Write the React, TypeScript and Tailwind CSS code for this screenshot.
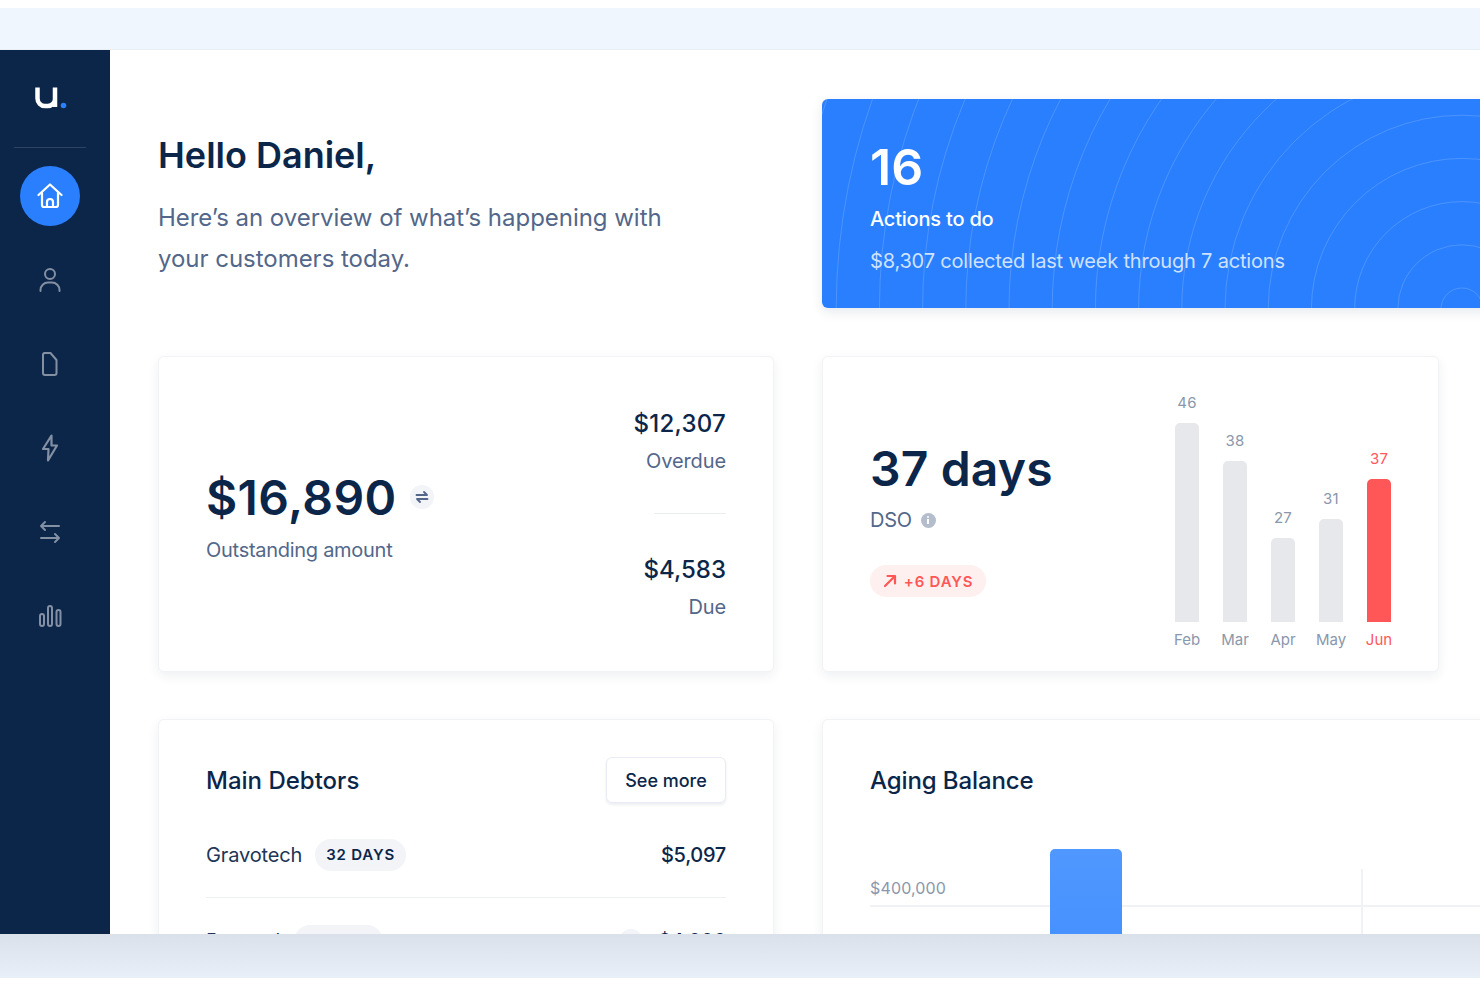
const font = "font-['Inter',sans-serif]";

function Logo() {
  return (
    <svg width="34" height="26" viewBox="0 0 34 26" fill="none">
      <path d="M3.500 2.500v11a7.500 7.500 0 0 0 7.500 7.500h3a7 7 0 0 0 7-7v-11.500M21 13v9" stroke="#fff" strokeWidth="4.500" />
      <circle cx="29.500" cy="20.500" r="2.800" fill="#2a7fff" />
    </svg>
  );
}

function HomeIcon() {
  return (
    <svg width="26" height="26" viewBox="0 0 26 26" fill="none" stroke="#fff" strokeWidth="2.200" strokeLinecap="round" strokeLinejoin="round">
      <path d="M1.500 12 13 1.500 24.500 12" />
      <path d="M5 9.500V22a2 2 0 0 0 2 2h12a2 2 0 0 0 2-2V9.500" />
      <path d="M10 24v-5a3 3 0 0 1 6 0v5" />
    </svg>
  );
}

function UserIcon() {
  return (
    <svg width="24" height="26" viewBox="0 0 24 26" fill="none" stroke="#838fa3" strokeWidth="2" strokeLinecap="round">
      <circle cx="12" cy="7" r="5" />
      <path d="M2.500 24v-1a7.500 7.500 0 0 1 7.500-7.500h4a7.500 7.500 0 0 1 7.500 7.500v1" />
    </svg>
  );
}

function FileIcon() {
  return (
    <svg width="20" height="26" viewBox="0 0 20 26" fill="none" stroke="#838fa3" strokeWidth="2" strokeLinejoin="round">
      <path d="M4 2h6.500l6 7v13a2 2 0 0 1-2 2H5a2 2 0 0 1-2-2V4a2 2 0 0 1 2-2Z" />
    </svg>
  );
}

function BoltIcon() {
  return (
    <svg width="18" height="28" viewBox="0 0 18 28" fill="none" stroke="#838fa3" strokeWidth="2.200" strokeLinejoin="round">
      <path d="M10.500 1.500 2 15h5.500L7 26.500 16 11.500h-5.500Z" />
    </svg>
  );
}

function SwapIcon() {
  return (
    <svg width="24" height="26" viewBox="0 0 24 26" fill="none" stroke="#838fa3" strokeWidth="2" strokeLinecap="round" strokeLinejoin="round">
      <path d="M21 7H3M7 3 3 7l4 4" />
      <path d="M3 19h18M17 15l4 4-4 4" />
    </svg>
  );
}

function BarsIcon() {
  return (
    <svg width="24" height="26" viewBox="0 0 24 26" fill="none" stroke="#838fa3" strokeWidth="2">
      <rect x="2" y="11" width="4" height="12" rx="2" />
      <rect x="10" y="3" width="4" height="20" rx="2" />
      <rect x="18.500" y="7" width="4" height="16" rx="2" />
    </svg>
  );
}

function Sidebar() {
  return (
    <aside className="w-[110px] shrink-0 bg-[#0b2649] flex flex-col items-center">
      <div className="w-full pl-[14px] pr-[24px]">
        <div className="h-[98px] flex items-center justify-center border-b border-[#2c4364]">
          <span className="relative left-[0.5px] -top-[1px]"><Logo /></span>
        </div>
      </div>
      <div className="flex flex-col items-center w-[60px] mr-[10px] mt-[18px]">
        <div className="w-[60px] h-[60px] rounded-full bg-[#2a7fff] flex items-center justify-center"><HomeIcon /></div>
        <div className="h-[84px] mt-[12px] flex items-center justify-center"><UserIcon /></div>
        <div className="h-[84px] flex items-center justify-center"><FileIcon /></div>
        <div className="h-[84px] flex items-center justify-center"><BoltIcon /></div>
        <div className="h-[84px] flex items-center justify-center"><SwapIcon /></div>
        <div className="h-[84px] flex items-center justify-center"><BarsIcon /></div>
      </div>
    </aside>
  );
}

function Card({ className, children }: { className: string; children: React.ReactNode }) {
  return (
    <div className={`bg-white rounded-[6px] border border-[#f1f3f6] shadow-[0_4px_12px_rgba(11,38,73,0.07)] ${className}`}>
      {children}
    </div>
  );
}

const bars = [
  { v: 46, m: "Feb", h: 199 },
  { v: 38, m: "Mar", h: 161 },
  { v: 27, m: "Apr", h: 84 },
  { v: 31, m: "May", h: 103 },
  { v: 37, m: "Jun", h: 143, red: true },
];

function Rings() {
  const radii = Array.from({ length: 18 }, (_, i) => 21 + i * 43.2);
  return (
    <svg className="absolute inset-0 w-full h-full" fill="none">
      {radii.map((r) => (
        <circle key={r} cx="640" cy="210" r={r} stroke="#ffffff" strokeOpacity="0.16" strokeWidth="1" />
      ))}
    </svg>
  );
}

export default function App() {
  return (
    <div className={`w-[1480px] h-[987px] overflow-hidden bg-white flex flex-col ${font}`}>
      <div className="h-[8px] shrink-0 bg-white" />
      <div className="h-[42px] shrink-0 bg-[#eff6fe] border-b border-[#e7eef6]" />
      <div className="h-[884px] shrink-0 flex overflow-hidden bg-white">
        <Sidebar />
        <main className="flex-1 min-w-0 overflow-hidden pl-[48px] pt-[49px] flex flex-col gap-[47px]">
          <section className="flex items-start gap-[48px] shrink-0 h-[210px]">
            <div className="w-[616px] shrink-0 pt-[34px]">
              <h1 className="text-[36px] leading-[44px] font-semibold text-[#0b2649]">Hello Daniel,</h1>
              <p className="mt-[20px] text-[24px] leading-[41px] tracking-[-0.03px] text-[#53678a]">
                Here’s an overview of what’s happening with<br />your customers today.
              </p>
            </div>
            <div className="relative w-[700px] shrink-0 h-[209px] rounded-[6px] bg-[#2a7fff] overflow-hidden pl-[48px] pt-[40px] shadow-[0_4px_12px_rgba(11,38,73,0.1)]">
              <Rings />
              <div className="relative text-[50px] leading-[56px] font-semibold text-white">16</div>
              <div className="relative mt-[10px] text-[20px] leading-[28px] tracking-[-0.2px] font-medium text-white">Actions to do</div>
              <div className="relative mt-[14px] text-[20px] leading-[28px] tracking-[-0.18px] text-[#cfe2ff]">$8,307 collected last week through 7 actions</div>
            </div>
          </section>

          <section className="flex gap-[48px] shrink-0">
            <Card className="w-[616px] shrink-0 h-[316px] flex items-center justify-between pl-[47px] pr-[47px]">
              <div className="pt-[4px]">
                <div className="flex items-center gap-[13px]">
                  <span className="text-[48px] leading-[58px] tracking-[0.4px] font-semibold text-[#0b2649]">$16,890</span>
                  <span className="w-[24px] h-[24px] mb-[2px] rounded-full bg-[#f2f4f8] flex items-center justify-center">
                    <svg width="14" height="12" viewBox="0 0 14 12" fill="none" stroke="#52668a" strokeWidth="1.800" strokeLinecap="round" strokeLinejoin="round">
                      <path d="M1.500 4h10.500M9 1l3 3" />
                      <path d="M12.500 8H2M5 11 2 8" />
                    </svg>
                  </span>
                </div>
                <div className="mt-[9px] text-[20px] leading-[28px] tracking-[-0.28px] text-[#53678a]">Outstanding amount</div>
              </div>
              <div className="w-[72px] flex flex-col items-end">
                <div className="text-[24px] leading-[32px] tracking-[0.25px] font-medium text-[#0b2649] whitespace-nowrap">$12,307</div>
                <div className="mt-[7px] text-[20px] leading-[28px] tracking-[-0.1px] text-[#53678a]">Overdue</div>
                <div className="w-full h-px bg-[#e9ecf1] mt-[38px] mb-[40px]" />
                <div className="text-[24px] leading-[32px] font-medium text-[#0b2649] whitespace-nowrap">$4,583</div>
                <div className="mt-[7px] text-[20px] leading-[28px] tracking-[-0.1px] text-[#53678a]">Due</div>
              </div>
            </Card>
            <Card className="w-[617px] shrink-0 h-[316px] flex justify-between pl-[47px] pr-[47px]">
              <div className="pt-[80px]">
                <div className="text-[48px] leading-[64px] tracking-[0.15px] font-semibold text-[#0b2649] whitespace-nowrap">37 days</div>
                <div className="mt-[5px] flex items-center gap-[9px]">
                  <span className="text-[20px] leading-[28px] tracking-[-0.2px] text-[#53678a]">DSO</span>
                  <span className="w-[15px] h-[15px] rounded-full bg-[#b4bdcb] flex flex-col items-center justify-center gap-[1px]">
                    <span className="w-[2px] h-[2px] bg-white rounded-full" />
                    <span className="w-[2px] h-[5px] bg-white" />
                  </span>
                </div>
                <div className="mt-[31px] w-[116px] h-[32px] rounded-full bg-[#fff0f0] flex items-center justify-center gap-[7px]">
                  <svg width="14" height="14" viewBox="0 0 14 14" fill="none" stroke="#ff5757" strokeWidth="2.200" strokeLinecap="round" strokeLinejoin="round">
                    <path d="M2 12 12 2M4.500 2H12v7.500" />
                  </svg>
                  <span className="text-[15px] leading-none font-semibold text-[#ff5757] tracking-[0.8px]">+6 DAYS</span>
                </div>
              </div>
              <div className="flex items-end gap-[24px] pb-[21px]">
                {bars.map((b) => (
                  <div key={b.m} className="w-[24px] flex flex-col items-center">
                    <span className={`text-[15px] leading-[20px] tracking-[0.2px] mb-[10px] ${b.red ? "text-[#ff5757]" : "text-[#8a97ac]"}`}>{b.v}</span>
                    <div
                      className={`w-[24px] rounded-t-[5px] ${b.red ? "bg-[#ff5757]" : "bg-[#e6e8ec]"}`}
                      style={{ height: b.h }}
                    />
                    <span className={`mt-[8px] text-[15px] leading-[20px] ${b.red ? "text-[#ff5757]" : "text-[#8a97ac]"}`}>{b.m}</span>
                  </div>
                ))}
              </div>
            </Card>
          </section>

          <section className="flex gap-[48px] shrink-0">
            <Card className="w-[616px] shrink-0 pl-[47px] pr-[47px] pt-[37px]">
              <div className="flex items-center justify-between h-[46px]">
                <h2 className="text-[24px] leading-[32px] pt-[2px] font-medium text-[#0b2649]">Main Debtors</h2>
                <button className="w-[120px] h-[46px] rounded-[6px] border border-[#e9ecf4] shadow-[0_2px_3px_rgba(11,38,73,0.08)] bg-white text-[18px] font-medium text-[#0b2649]">See more</button>
              </div>
              <div className="h-[95px] pt-[10px] flex items-center border-b border-[#eef0f3]">
                <span className="text-[20px] tracking-[-0.15px] text-[#1d3556]">Gravotech</span>
                <span className="ml-[13px] w-[91px] h-[32px] rounded-full bg-[#f2f4f8] flex items-center justify-center text-[15px] font-semibold tracking-[0.8px] text-[#0b2649]">32 DAYS</span>
                <span className="ml-auto text-[20px] tracking-[-0.3px] font-medium text-[#0b2649]">$5,097</span>
              </div>
              <div className="h-[86px] flex items-center">
                <span className="w-[75px] text-[20px] tracking-[-0.15px] text-[#1d3556] whitespace-nowrap">Bernard</span>
                <span className="ml-[13px] w-[89px] h-[32px] rounded-full bg-[#f2f4f8] flex items-center justify-center text-[15px] font-semibold tracking-[0.8px] text-[#0b2649]">21 DAYS</span>
                <span className="ml-auto mr-[15px] w-[24px] h-[24px] rounded-full bg-[#f2f4f8]" />
                <span className="text-[20px] tracking-[-0.3px] font-medium text-[#0b2649]">$4,000</span>
              </div>
            </Card>
            <Card className="w-[700px] shrink-0 pl-[47px] pt-[42px] h-[300px]">
              <h2 className="text-[24px] leading-[38px] tracking-[-0.1px] font-medium text-[#0b2649]">Aging Balance</h2>
              <div className="relative mt-[69px] h-[120px]">
                <div className="h-[38px] pt-[2px] flex items-center border-b-2 border-[#f0f2f6]">
                  <span className="text-[16px] tracking-[0.15px] text-[#8a97ac]">$400,000</span>
                </div>
                <div className="absolute left-[180px] -top-[20px] w-[72px] h-[120px] rounded-t-[5px] bg-gradient-to-b from-[#5098ff] to-[#428fff]" />
                <div className="absolute left-[491px] top-0 w-[2px] h-[120px] bg-[#f0f2f6]" />
              </div>
            </Card>
          </section>
        </main>
      </div>
      <div className="h-[44px] shrink-0 bg-gradient-to-b from-[#dbe1ea] to-[#e9eff8]" />
      <div className="flex-1 bg-white" />
    </div>
  );
}
